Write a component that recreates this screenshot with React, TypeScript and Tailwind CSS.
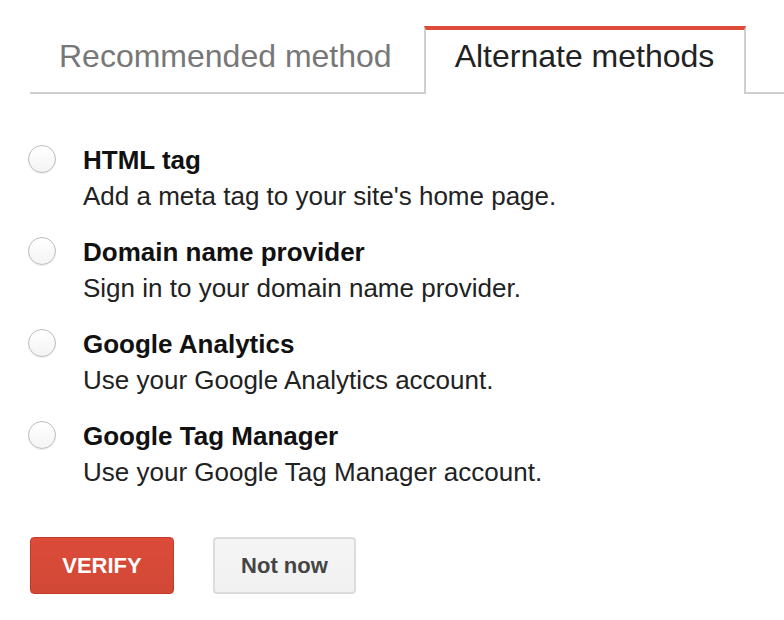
import React from "react";

const methods = [
  { title: "HTML tag", desc: "Add a meta tag to your site's home page." },
  { title: "Domain name provider", desc: "Sign in to your domain name provider." },
  { title: "Google Analytics", desc: "Use your Google Analytics account." },
  { title: "Google Tag Manager", desc: "Use your Google Tag Manager account." },
];

function Radio() {
  return (
    <span className="mt-[3px] block h-[28px] w-[28px] shrink-0 rounded-full border border-[#bdbdbd] bg-gradient-to-b from-white to-[#f4f4f4] shadow-[0_1px_1px_rgba(0,0,0,0.08)]" />
  );
}

export default function App() {
  return (
    <div
      className="h-[620px] w-[784px] overflow-hidden bg-white text-[#222]"
      style={{ fontFamily: '"Liberation Sans", Arial, sans-serif' }}
    >
      {/* tab strip */}
      <div className="flex pt-[26px] pl-[30px]">
        <div className="flex items-end border-b-2 border-[#cfcfcf]">
          <div className="pl-[29px] pr-[27px] pt-[14px] pb-[20px] text-[32px] leading-[32px] text-[#777]">
            Recommended method
          </div>
        </div>
        <div className="w-[5px] border-b-2 border-[#cfcfcf]" />
        <div className="border-x-2 border-t-4 border-x-[#cfcfcf] border-t-[#dd4b39] pl-[29px] pr-[30px] pt-[10px] pb-[22px] text-[32px] leading-[32px] text-[#222]">
          Alternate methods
        </div>
        <div className="flex-1 border-b-2 border-[#cfcfcf]" />
      </div>

      {/* method list */}
      <div className="flex flex-col gap-[20px] pt-[48px] pl-[28px]">
        {methods.map((m) => (
          <div key={m.title} className="flex items-start gap-[27px]">
            <Radio />
            <div className="flex flex-col">
              <div className="text-[26px] font-bold leading-[36px] text-[#111]">{m.title}</div>
              <div className="text-[26px] leading-[36px] text-[#222]">{m.desc}</div>
            </div>
          </div>
        ))}
      </div>

      {/* actions */}
      <div className="flex gap-[39px] pt-[47px] pl-[30px]">
        <button className="flex h-[57px] w-[144px] items-center justify-center rounded-[4px] border border-[#c5392a] bg-gradient-to-b from-[#dd4b39] to-[#d14836] text-[22px] font-bold text-white">
          VERIFY
        </button>
        <button className="flex h-[57px] w-[143px] items-center justify-center rounded-[4px] border-2 border-[#dcdcdc] bg-gradient-to-b from-[#f5f5f5] to-[#f1f1f1] text-[22px] font-bold text-[#444]">
          Not now
        </button>
      </div>
    </div>
  );
}
